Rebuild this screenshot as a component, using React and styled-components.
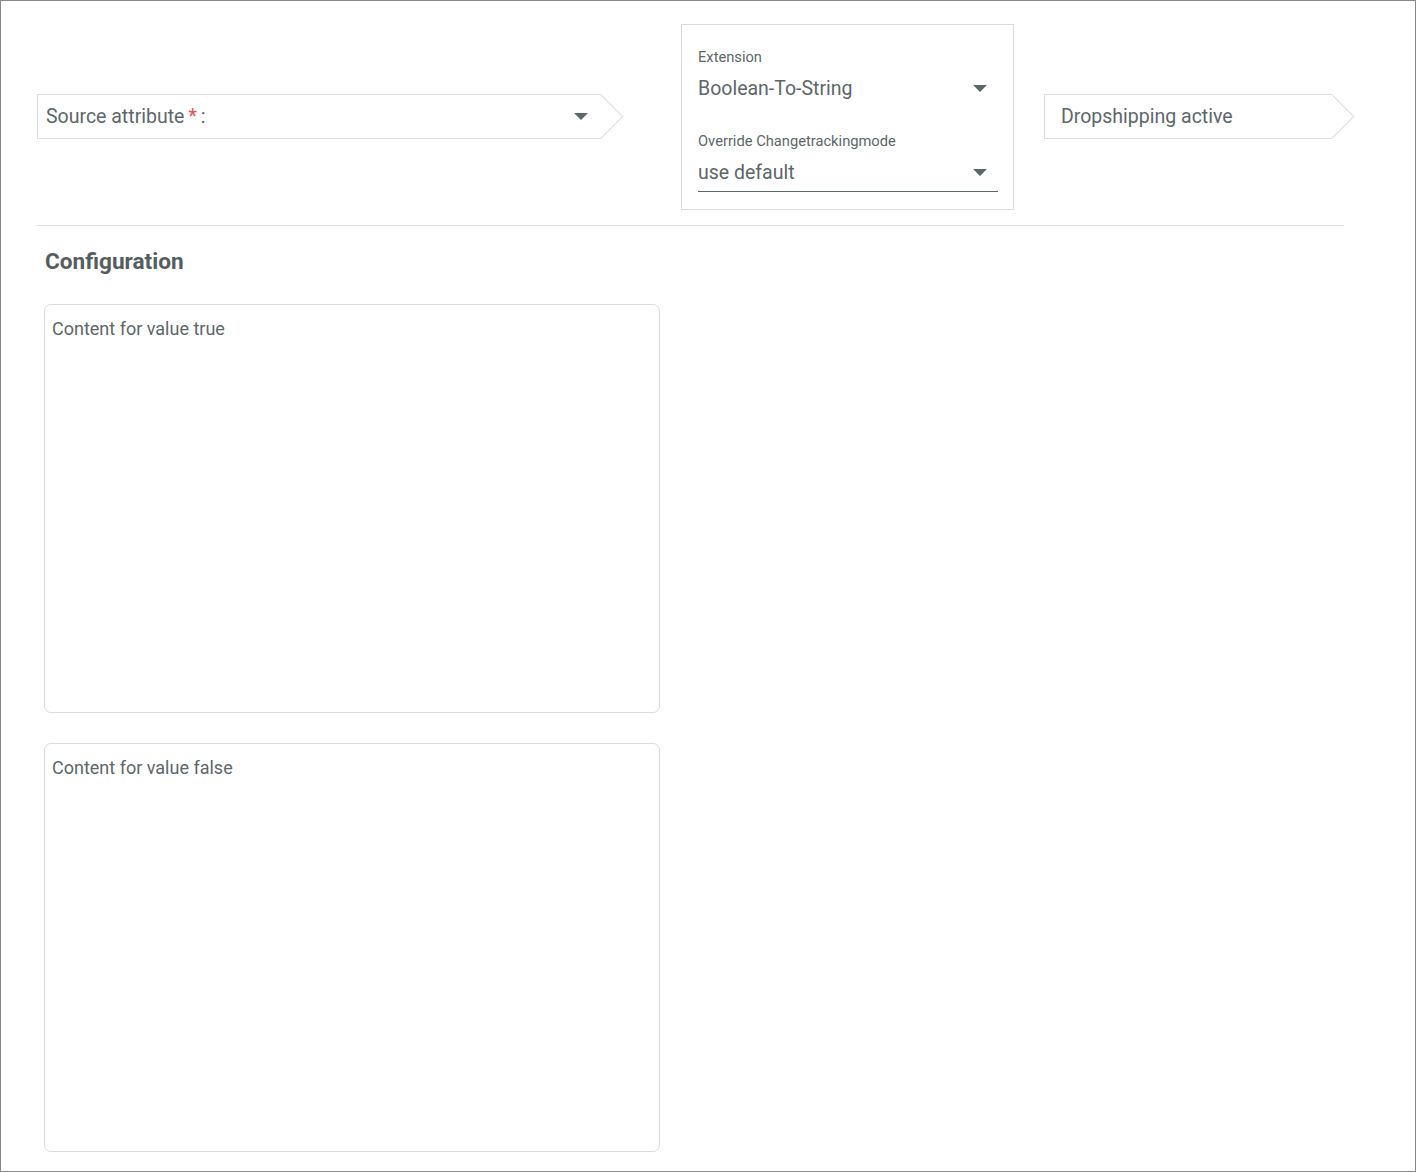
import React from "react";
import styled, { createGlobalStyle } from "styled-components";

const GlobalStyle = createGlobalStyle`
  html, body {
    margin: 0;
    padding: 0;
    background: #fff;
  }
  body {
    font-family: Roboto, "Liberation Sans", sans-serif;
    color: #5c6769;
  }
`;

const Frame = styled.div`
  box-sizing: border-box;
  width: 1416px;
  height: 1172px;
  border: 1px solid #8a8a8a;
  padding: 23px 0 0 36px;
`;

const TopRow = styled.div`
  display: flex;
  align-items: center;
`;

const ArrowBox = styled.div`
  position: relative;
  box-sizing: border-box;
  width: ${(p) => p.width}px;
  height: 45px;
  margin-bottom: 1px;
  border: 1px solid #dcdcdc;
  border-right: none;
  display: flex;
  align-items: center;
  padding: 0 13px 0 8px;
  font-size: 19.5px;
  background: #fff;

  &::after {
    content: "";
    position: absolute;
    right: -16px;
    top: 6px;
    width: 31px;
    height: 31px;
    box-sizing: border-box;
    border-top: 1px solid #dcdcdc;
    border-right: 1px solid #dcdcdc;
    background: #fff;
    transform: rotate(45deg);
  }
`;

const BoxText = styled.span`
  flex: 1;
  position: relative;
  z-index: 1;
  padding-left: ${(p) => p.indent || 0}px;
`;

const Required = styled.span`
  color: #e0514f;
  margin: 0 4px;
`;

const Caret = styled.span`
  flex-shrink: 0;
  width: 0;
  height: 0;
  border-left: 7px solid transparent;
  border-right: 7px solid transparent;
  border-top: 7px solid #5c6769;
  position: relative;
  z-index: 1;
`;

const Panel = styled.div`
  box-sizing: border-box;
  width: 333px;
  height: 186px;
  border: 1px solid #dcdcdc;
  padding: 23px 15px 0 16px;
  margin: 0 30px 0 80px;
`;

const FieldLabel = styled.div`
  font-size: 14.7px;
  line-height: 18px;
`;

const FieldValue = styled.div`
  box-sizing: border-box;
  display: flex;
  align-items: center;
  justify-content: space-between;
  font-size: 19.5px;
  height: 42px;
  padding: ${(p) => p.top ?? 4}px 11px 0 0;
  margin-bottom: ${(p) => p.spacing || 0}px;
  border-bottom: ${(p) => (p.underline ? "1px solid #5c6769" : "none")};
`;

const Divider = styled.div`
  width: 1307px;
  height: 1px;
  background: #dcdcdc;
  margin-top: 15px;
`;

const Heading = styled.h2`
  margin: 22px 0 0 8px;
  font-size: 22.6px;
  font-weight: 700;
  line-height: 28px;
  color: #545e60;
`;

const TextArea = styled.textarea`
  display: block;
  box-sizing: border-box;
  width: 616px;
  height: 409px;
  margin: ${(p) => p.top}px 0 0 7px;
  border: 1px solid #dcdcdc;
  border-radius: 7px;
  padding: 13px 7px;
  resize: none;
  font-family: Roboto, "Liberation Sans", sans-serif;
  font-size: 18px;
  outline: none;

  &::placeholder {
    color: #5c6769;
    opacity: 1;
  }
`;

export default function App() {
  return (
    <>
      <GlobalStyle />
      <Frame>
        <TopRow>
          <ArrowBox width={564}>
            <BoxText>
              Source attribute<Required>*</Required>:
            </BoxText>
            <Caret />
          </ArrowBox>
          <Panel>
            <FieldLabel>Extension</FieldLabel>
            <FieldValue top={2} spacing={24}>
              Boolean-To-String
              <Caret />
            </FieldValue>
            <FieldLabel>Override Changetrackingmode</FieldLabel>
            <FieldValue underline>
              use default
              <Caret />
            </FieldValue>
          </Panel>
          <ArrowBox width={288}>
            <BoxText indent={8}>Dropshipping active</BoxText>
          </ArrowBox>
        </TopRow>
        <Divider />
        <Heading>Configuration</Heading>
        <TextArea top={28} placeholder="Content for value true" />
        <TextArea top={30} placeholder="Content for value false" />
      </Frame>
    </>
  );
}
